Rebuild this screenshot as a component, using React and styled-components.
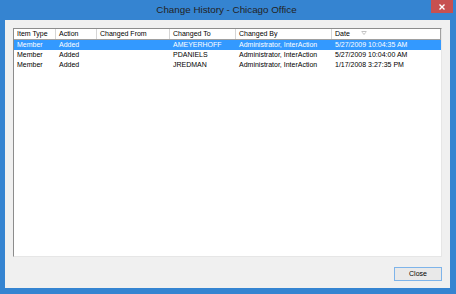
import React from 'react'
import styled, { createGlobalStyle } from 'styled-components'

const GlobalStyle = createGlobalStyle`
  html, body {
    margin: 0;
    padding: 0;
    background: #3584d1;
  }
  body {
    font-family: "Liberation Sans", Arial, sans-serif;
  }
`

const Window = styled.div`
  width: 456px;
  height: 294px;
  background: #3584d1;
  display: flex;
  flex-direction: column;
  box-sizing: border-box;
`

const TitleBar = styled.div`
  height: 20px;
  flex: none;
  display: grid;
  grid-template-columns: 1fr auto 1fr;
  align-items: start;
  padding-right: 3px;
`

const Title = styled.div`
  grid-column: 2;
  font-size: 9.8px;
  line-height: 20px;
  color: #222;
  white-space: nowrap;
`

const CloseX = styled.div`
  grid-column: 3;
  justify-self: end;
  width: 22px;
  height: 13px;
  background: #c75050;
  display: flex;
  align-items: center;
  justify-content: center;
`

const Body = styled.div`
  flex: 1;
  margin: 0 6px 6px 5px;
  background: #f0f0f0;
  display: flex;
  flex-direction: column;
  padding: 8px 8px 7px 8px;
  box-sizing: border-box;
`

const List = styled.div`
  height: 229px;
  flex: none;
  background: #fff;
  border: 1px solid;
  border-color: #8c8c8c #e6e6e6 #e6e6e6 #8c8c8c;
  box-sizing: border-box;
  display: flex;
  flex-direction: column;
  font-size: 7px;
`

const cols = '42px 41px 73px 66px 96px 109px'

const Header = styled.div`
  display: grid;
  grid-template-columns: ${cols};
  height: 11px;
  border-bottom: 1px solid #a0a0a0;
  box-sizing: border-box;
`

const HeadCell = styled.div`
  position: relative;
  padding-left: 3px;
  line-height: 10px;
  color: #000;
  border-right: 1px solid ${p => (p.last ? '#a0a0a0' : '#d5d5d5')};
  white-space: nowrap;
`

const SortMark = styled.svg`
  position: absolute;
  left: 29px;
  top: 2px;
`

const Row = styled.div`
  display: grid;
  grid-template-columns: ${cols};
  height: 10px;
  background: ${p => (p.selected ? '#3399ff' : 'transparent')};
  color: ${p => (p.selected ? '#fff' : '#000')};
`

const Cell = styled.div`
  padding-left: 3px;
  line-height: 10px;
  white-space: nowrap;
  overflow: hidden;
`

const Footer = styled.div`
  flex: 1;
  display: flex;
  justify-content: flex-end;
  align-items: flex-end;
`

const Button = styled.button`
  width: 48px;
  height: 14px;
  padding: 0;
  margin: 0;
  border: 1px solid #7eb4ea;
  background: #e9e9e9;
  font-family: "Liberation Sans", Arial, sans-serif;
  font-size: 7px;
  color: #000;
  line-height: 12px;
`

const headers = ['Item Type', 'Action', 'Changed From', 'Changed To', 'Changed By', 'Date']

const rows = [
  ['Member', 'Added', '', 'AMEYERHOFF', 'Administrator, InterAction', '5/27/2009 10:04:35 AM'],
  ['Member', 'Added', '', 'PDANIELS', 'Administrator, InterAction', '5/27/2009 10:04:00 AM'],
  ['Member', 'Added', '', 'JREDMAN', 'Administrator, InterAction', '1/17/2008 3:27:35 PM'],
]

export default function App() {
  return (
    <>
      <GlobalStyle />
      <Window>
        <TitleBar>
          <Title>Change History - Chicago Office</Title>
          <CloseX>
            <svg width="6" height="6" viewBox="0 0 6 6">
              <path d="M0.5 0.5 L5.5 5.5 M5.5 0.5 L0.5 5.5" stroke="#fff" strokeWidth="1.4" />
            </svg>
          </CloseX>
        </TitleBar>
        <Body>
          <List>
            <Header>
              {headers.map((h, i) => (
                <HeadCell key={h} last={i === headers.length - 1}>
                  {h}
                  {h === 'Date' && (
                    <SortMark width="6" height="4" viewBox="0 0 6 4">
                      <path d="M0.5 0.5 H5.5 M1.2 1.3 L3 3.5 L4.8 1.3" fill="none" stroke="#a8a8a8" strokeWidth="0.7" />
                    </SortMark>
                  )}
                </HeadCell>
              ))}
            </Header>
            {rows.map((r, i) => (
              <Row key={i} selected={i === 0}>
                {r.map((c, j) => (
                  <Cell key={j}>{c}</Cell>
                ))}
              </Row>
            ))}
          </List>
          <Footer>
            <Button>Close</Button>
          </Footer>
        </Body>
      </Window>
    </>
  )
}
